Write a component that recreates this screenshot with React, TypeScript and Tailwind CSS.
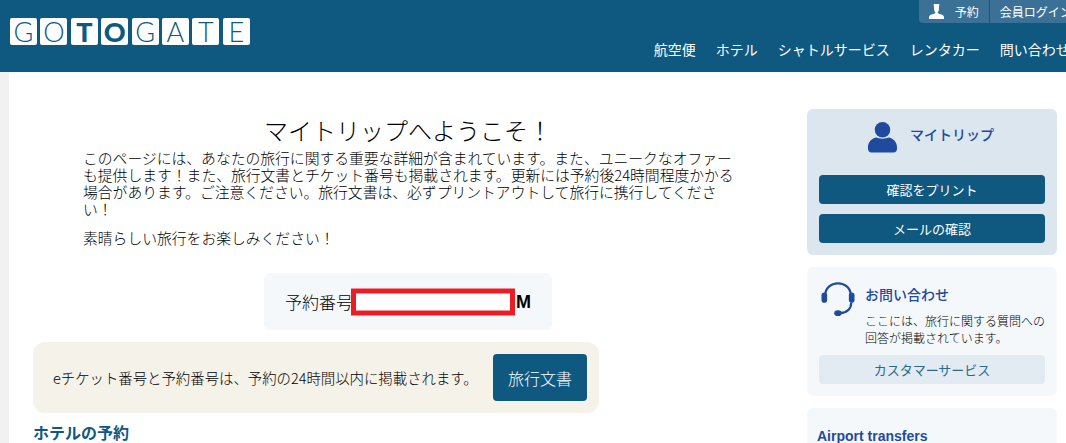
const jp = "font-['Noto_Sans_CJK_JP','Liberation_Sans',sans-serif]"

const logoLetters = [
  { ch: 'G', bold: false },
  { ch: 'O', bold: false },
  { ch: 'T', bold: true },
  { ch: 'O', bold: true },
  { ch: 'G', bold: false },
  { ch: 'A', bold: false },
  { ch: 'T', bold: false },
  { ch: 'E', bold: false },
]

const navItems = ['航空便', 'ホテル', 'シャトルサービス', 'レンタカー', '問い合わせ']

function Logo() {
  return (
    <div className="flex gap-[3.4px]">
      {logoLetters.map((l, i) => (
        <div
          key={i}
          className={`flex h-[27px] w-[27px] items-center justify-center rounded-[2px] bg-white font-['Lato',sans-serif] text-[27px] leading-none text-[#0f5880] ${l.bold ? 'font-black' : 'font-light'}`}
        >
          {l.ch}
        </div>
      ))}
    </div>
  )
}

function UserIcon({ className }: { className: string }) {
  return (
    <svg viewBox="0 0 30 32" className={className} fill="currentColor">
      <circle cx="15" cy="8.5" r="8" />
      <path d="M9 16.5c2 1.6 10 1.6 12 0 5 0.6 9 4.5 9 10v2c0 2-1.5 3.5-3.5 3.5h-23C1.500 32 0 30.500 0 28.500v-2c0-5.500 4-9.400 9-10z" />
    </svg>
  )
}

function SmallUserIcon() {
  return (
    <svg viewBox="0 0 16 16" className="h-[15px] w-[15px] text-white" fill="currentColor">
      <path d="M5 0h6l-.5 6c-.2 1.500-.8 2.400-1.300 3 .3 1 1.300 1.500 3.300 2 2 .5 3.500 1.500 3.500 3.500V16H0v-1.500C0 12.500 1.500 11.500 3.500 11c2-.5 3-1 3.300-2-.5-.6-1.100-1.500-1.300-3z" />
    </svg>
  )
}

function HeadsetIcon() {
  return (
    <svg viewBox="0 0 36 36" className="h-[36px] w-[36px] text-[#1f4a9e]" fill="none" stroke="currentColor">
      <path d="M4.500 14C4.500 6.500 10.500 1.500 18 1.500S31.500 6.500 31.500 14" strokeWidth="2.400" />
      <rect x="0.500" y="11" width="6" height="11" rx="3" fill="currentColor" stroke="none" />
      <rect x="29.500" y="11" width="6" height="11" rx="3" fill="currentColor" stroke="none" />
      <path d="M32 22c0 6-4 10.500-12 11" strokeWidth="2.400" />
      <ellipse cx="18" cy="33" rx="4" ry="3" fill="currentColor" stroke="none" />
    </svg>
  )
}

export default function App() {
  return (
    <div className={`h-[443px] w-[1066px] overflow-hidden bg-white ${jp}`}>
      <header className="flex h-[72px] bg-[#0f5880]">
        <div className="pl-[10px] pt-[18px]">
          <Logo />
        </div>
        <div className="ml-[404px] flex w-[500px] shrink-0 flex-col">
          <div className="ml-[265px] flex h-[23px] w-[200px] text-[12px] leading-[12px] text-white">
            <div className="flex w-[70px] items-center gap-[11px] rounded-bl-[4px] bg-[#3b7196] pl-[10px]">
              <SmallUserIcon />
              <span>予約</span>
            </div>
            <div className="ml-px flex flex-1 items-center whitespace-nowrap rounded-br-[4px] bg-[#3b7196] pl-[10px]">
              会員ログイン
            </div>
          </div>
          <nav className="mt-[16px] flex gap-[20px] whitespace-nowrap text-[14px] leading-[20px] text-white">
            {navItems.map(item => (
              <span key={item}>{item}</span>
            ))}
          </nav>
        </div>
      </header>

      <div className="flex border-l-[9px] border-[#f1f1f1]">
        <main className="w-[774px] shrink-0 pl-[24px] text-black">
          <h1 className="mt-[43px] w-[750px] text-center text-[24px] font-light leading-[30px]">マイトリップへようこそ！</h1>
          <div className="ml-[50px] mt-[4px] w-[655px] text-[14.8px] font-light leading-[17px]">
            <p>
              このページには、あなたの旅行に関する重要な詳細が含まれています。また、ユニークなオファーも提供します！また、旅行文書とチケット番号も掲載されます。更新には予約後24時間程度かかる場合があります。ご注意ください。旅行文書は、必ずプリントアウトして旅行に携行してください！
            </p>
            <p className="mt-[12px]">素晴らしい旅行をお楽しみください！</p>
          </div>

          <div className="ml-[231px] mt-[27px] flex h-[57px] w-[288px] items-center rounded-[6px] bg-[#f5f8fb] pl-[21px] text-[17px] font-light">
            <span>予約番号</span>
            <div className="relative flex-1">
              <span className="absolute right-[21px] top-1/2 -translate-y-1/2 font-['Liberation_Sans',sans-serif] text-[18px] font-bold">M</span>
              <div className="absolute left-[-2px] top-1/2 h-[27px] w-[164px] -translate-y-1/2 border-[5px] border-[#ed1c24] bg-white" />
            </div>
          </div>

          <div className="mt-[12px] flex h-[71px] w-[566px] items-center justify-between rounded-[12px] bg-[#f5f2ea] pl-[20px] pr-[12px] text-[14.4px] font-light">
            <span>eチケット番号と予約番号は、予約の24時間以内に掲載されます。</span>
            <button className="h-[47px] w-[94px] rounded-[4px] bg-[#0f5880] text-[16px] text-white">旅行文書</button>
          </div>

          <h2 className="mt-[9px] text-[16px] font-bold leading-[20px] text-[#0f5880]">ホテルの予約</h2>
        </main>

        <aside className="ml-[24px] mt-[37px] flex w-[250px] shrink-0 flex-col gap-[12px]">
          <section className="h-[146px] rounded-[6px] bg-[#dbe6ee] px-[12px] pt-[12px]">
            <div className="flex items-center justify-center gap-[13px] pr-[2px]">
              <UserIcon className="h-[32px] w-[29px] text-[#1f4a9e]" />
              <span className="pb-[6px] text-[14px] font-medium text-[#1f4a9e]">マイトリップ</span>
            </div>
            <button className="mt-[22px] h-[29px] w-full rounded-[4px] bg-[#0f5880] text-[13px] text-white">確認をプリント</button>
            <button className="mt-[10px] h-[29px] w-full rounded-[4px] bg-[#0f5880] text-[13px] text-white">メールの確認</button>
          </section>

          <section className="h-[129px] rounded-[6px] bg-[#f5f8fb] px-[12px] pt-[14px]">
            <div className="flex gap-[10px] pl-[2px]">
              <HeadsetIcon />
              <div className="flex-1">
                <h3 className="mt-[4px] text-[14px] font-medium leading-[18px] text-[#1f4a9e]">お問い合わせ</h3>
                <p className="mt-[10px] whitespace-nowrap text-[12px] font-light leading-[16.5px]">
                  ここには、旅行に関する質問への
                  <br />
                  回答が掲載されています。
                </p>
              </div>
            </div>
            <button className="mt-[9px] h-[29px] w-full rounded-[4px] bg-[#e1ebf1] text-[13px] text-[#2a6a8e]">カスタマーサービス</button>
          </section>

          <section className="h-[60px] rounded-[6px] bg-[#f5f8fb] pl-[10px] pt-[19px]">
            <h3 className="font-['Liberation_Sans',sans-serif] text-[14px] font-bold leading-[18px] text-[#1f4a9e]">Airport transfers</h3>
          </section>
        </aside>
      </div>
    </div>
  )
}
